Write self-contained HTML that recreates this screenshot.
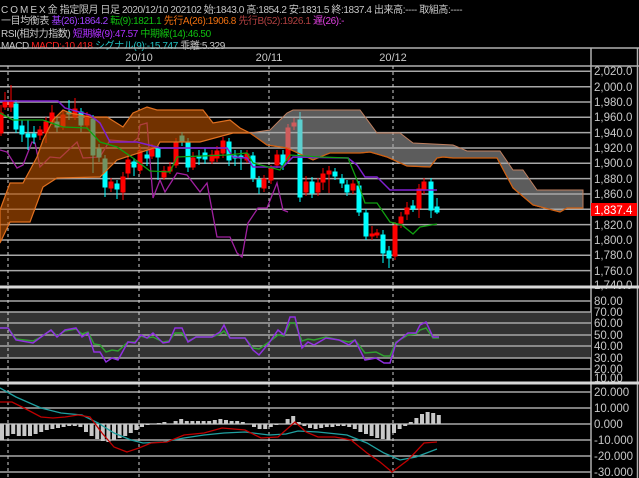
<!DOCTYPE html>
<html><head><meta charset="utf-8"><style>
html,body{margin:0;padding:0;background:#000;width:639px;height:478px;overflow:hidden}
.h{position:absolute;left:1px;font:10px "Liberation Sans","Noto Sans CJK JP",sans-serif;color:#c8c8c8;white-space:nowrap;letter-spacing:-0.4px}
</style></head><body>
<div class="h" style="top:1px"><span style="letter-spacing:2px">COMEX</span>金 指定限月 日足 2020/12/10 202102 始:1843.0 高:1854.2 安:1831.5 終:1837.4 出来高:---- 取組高:----</div>
<div class="h" style="top:12px">一目均衡表 <span style="color:#a040ff">基(26):1864.2</span> <span style="color:#10c010">転(9):1821.1</span> <span style="color:#f07010">先行A(26):1906.8</span> <span style="color:#b04040">先行B(52):1926.1</span> <span style="color:#e040e0">遅(26):-</span></div>
<div class="h" style="top:25px">RSI(相対力指数) <span style="color:#b030ff">短期線(9):47.57</span> <span style="color:#10c010">中期線(14):46.50</span></div>
<div class="h" style="top:37px">MACD <span style="color:#ff2020">MACD:-10.418</span> <span style="color:#20c0c0">シグナル(9):-15.747</span> 乖離:5.329</div>
<svg width="639" height="478" style="position:absolute;left:0;top:0" font-family="Liberation Sans,sans-serif" font-size="11">
<g fill="#c8c8c8" text-anchor="middle"><text x="139" y="61">20/10</text><text x="269" y="61">20/11</text><text x="393" y="61">20/12</text></g>
<g stroke="#b0b0b0" stroke-width="1.5"><line x1="0" y1="48" x2="639" y2="48"/><line x1="0" y1="66" x2="639" y2="66"/><line x1="591" y1="48" x2="591" y2="478"/><line x1="637.5" y1="48" x2="637.5" y2="478"/></g>
<g stroke="#a8a8a8" stroke-width="1.5">
<line x1="0" x2="591" y1="71.3" y2="71.3"/><line x1="0" x2="591" y1="86.7" y2="86.7"/><line x1="0" x2="591" y1="102" y2="102"/><line x1="0" x2="591" y1="117.3" y2="117.3"/><line x1="0" x2="591" y1="132.6" y2="132.6"/><line x1="0" x2="591" y1="148" y2="148"/><line x1="0" x2="591" y1="163.3" y2="163.3"/><line x1="0" x2="591" y1="178.6" y2="178.6"/><line x1="0" x2="591" y1="194" y2="194"/><line x1="0" x2="591" y1="209.3" y2="209.3"/><line x1="0" x2="591" y1="224.6" y2="224.6"/><line x1="0" x2="591" y1="240" y2="240"/><line x1="0" x2="591" y1="255.3" y2="255.3"/><line x1="0" x2="591" y1="270.6" y2="270.6"/>
</g>
<g fill="#c8c8c8" font-size="11.5"><text x="594" y="75">2,020.0</text><text x="594" y="91">2,000.0</text><text x="594" y="106">1,980.0</text><text x="594" y="121">1,960.0</text><text x="594" y="137">1,940.0</text><text x="594" y="152">1,920.0</text><text x="594" y="167">1,900.0</text><text x="594" y="183">1,880.0</text><text x="594" y="198">1,860.0</text><text x="594" y="244">1,800.0</text><text x="594" y="229">1,820.0</text><text x="594" y="259">1,780.0</text><text x="594" y="275">1,760.0</text><text x="594" y="289">1,740.0</text></g>
<rect x="591" y="203" width="46" height="13" fill="#ff0000"/><text x="594" y="214" fill="#fff" font-size="11.5">1,837.4</text>
<rect x="0" y="312" width="591" height="46" fill="#333"/>
<g stroke="#a8a8a8" stroke-width="1.5">
<line x1="0" x2="591" y1="301" y2="301"/><line x1="0" x2="591" y1="312" y2="312"/><line x1="0" x2="591" y1="323" y2="323"/><line x1="0" x2="591" y1="335" y2="335"/><line x1="0" x2="591" y1="346" y2="346"/><line x1="0" x2="591" y1="358" y2="358"/><line x1="0" x2="591" y1="369" y2="369"/>
<line x1="0" x2="591" y1="392" y2="392"/><line x1="0" x2="591" y1="408" y2="408"/><line x1="0" x2="591" y1="424" y2="424"/><line x1="0" x2="591" y1="440" y2="440"/><line x1="0" x2="591" y1="456" y2="456"/><line x1="0" x2="591" y1="472" y2="472"/>
</g>
<g fill="#c8c8c8" font-size="11.5"><text x="594" y="305">80.00</text><text x="594" y="316">70.00</text><text x="594" y="327">60.00</text><text x="594" y="339">50.00</text><text x="594" y="350">40.00</text><text x="594" y="362">30.00</text><text x="594" y="373">20.00</text><text x="594" y="382">10.00</text>
<text x="594" y="396">20.000</text><text x="594" y="412">10.000</text><text x="594" y="428">0.000</text><text x="594" y="444">-10.000</text><text x="594" y="460">-20.000</text><text x="594" y="476">-30.000</text></g>
<g stroke="#d0d0d0" stroke-width="1" stroke-dasharray="3,3"><line x1="8" y1="66" x2="8" y2="478"/><line x1="139" y1="66" x2="139" y2="478"/><line x1="269" y1="66" x2="269" y2="478"/><line x1="393" y1="66" x2="393" y2="478"/></g>
<polyline fill="none" stroke="#a020a0" stroke-width="1.3" points="0,150 7,152 17,168 23,165 32,142 35,143 40,167 50,157 60,158 77,142 83,158 100,157 110,140 133,142 138,138 140,125 147,123 153,198 160,180 165,192 177,173 187,175 200,192 207,183 217,237 230,237 237,253 242,257 248,223 258,208 267,208 277,183 283,210 288,212"/>
<g stroke-width="1">
<g fill="#ff0000" stroke="#ff0000">
<line x1="1" y1="105" x2="1" y2="136"/><rect x="0" y="113" width="3" height="20"/>
<line x1="5" y1="92" x2="5" y2="110"/><rect x="3" y="102" width="4" height="5"/>
<line x1="11" y1="85" x2="11" y2="112"/><rect x="9" y="102" width="4" height="5"/>
<line x1="40" y1="126" x2="40" y2="140"/><rect x="38" y="130" width="4" height="5"/>
<line x1="46" y1="117" x2="46" y2="143"/><rect x="44" y="122" width="4" height="11"/>
<line x1="52" y1="105" x2="52" y2="125"/><rect x="50" y="113" width="4" height="9"/>
<line x1="63" y1="110" x2="63" y2="130"/><rect x="61" y="115" width="4" height="12"/>
<line x1="75" y1="98" x2="75" y2="120"/><rect x="73" y="109" width="4" height="8"/>
<line x1="87" y1="112" x2="87" y2="128"/><rect x="85" y="116" width="4" height="9"/>
<line x1="111" y1="178" x2="111" y2="192"/><rect x="109" y="182" width="4" height="6"/>
<line x1="123" y1="172" x2="123" y2="200"/><rect x="121" y="177" width="4" height="15"/>
<line x1="128" y1="155" x2="128" y2="178"/><rect x="126" y="160" width="4" height="13"/>
<line x1="140" y1="146" x2="140" y2="174"/><rect x="138" y="151" width="4" height="19"/>
<line x1="152" y1="144" x2="152" y2="159"/><rect x="150" y="148" width="4" height="8"/>
<line x1="164" y1="166" x2="164" y2="180"/><rect x="162" y="171" width="4" height="6"/>
<line x1="170" y1="162" x2="170" y2="174"/><rect x="168" y="167" width="4" height="4"/>
<line x1="176" y1="138" x2="176" y2="168"/><rect x="174" y="143" width="4" height="22"/>
<line x1="193" y1="152" x2="193" y2="170"/><rect x="191" y="158" width="4" height="9"/>
<line x1="212" y1="150" x2="212" y2="164"/><rect x="210" y="155" width="4" height="6"/>
<line x1="217" y1="146" x2="217" y2="162"/><rect x="215" y="151" width="4" height="7"/>
<line x1="223" y1="137" x2="223" y2="158"/><rect x="221" y="141" width="4" height="12"/>
<line x1="247" y1="150" x2="247" y2="163"/><rect x="245" y="154" width="4" height="6"/>
<line x1="264" y1="175" x2="264" y2="192"/><rect x="262" y="179" width="4" height="9"/>
<line x1="271" y1="165" x2="271" y2="184"/><rect x="269" y="169" width="4" height="11"/>
<line x1="277" y1="150" x2="277" y2="168"/><rect x="275" y="155" width="4" height="10"/>
<line x1="288" y1="124" x2="288" y2="163"/><rect x="286" y="128" width="4" height="32"/>
<line x1="294" y1="118" x2="294" y2="130"/><rect x="292" y="123" width="4" height="3"/>
<line x1="306" y1="176" x2="306" y2="196"/><rect x="304" y="182" width="4" height="10"/>
<line x1="318" y1="178" x2="318" y2="196"/><rect x="316" y="183" width="4" height="9"/>
<line x1="323" y1="168" x2="323" y2="190"/><rect x="321" y="174" width="4" height="8"/>
<line x1="329" y1="166" x2="329" y2="193"/><rect x="327" y="171" width="4" height="3"/>
<line x1="353" y1="180" x2="353" y2="194"/><rect x="351" y="184" width="4" height="6"/>
<line x1="372" y1="226" x2="372" y2="240"/><rect x="370" y="234" width="4" height="2"/>
<line x1="377" y1="229" x2="377" y2="238"/><rect x="375" y="233" width="4" height="2"/>
<line x1="395" y1="222" x2="395" y2="260"/><rect x="393" y="226" width="4" height="30"/>
<line x1="401" y1="212" x2="401" y2="228"/><rect x="399" y="217" width="4" height="6"/>
<line x1="407" y1="202" x2="407" y2="220"/><rect x="405" y="208" width="4" height="6"/>
<line x1="419" y1="184" x2="419" y2="218"/><rect x="417" y="189" width="4" height="19"/>
<line x1="424" y1="178" x2="424" y2="194"/><rect x="422" y="182" width="4" height="8"/>
</g>
<g fill="#00ffff" stroke="#00ffff">
<line x1="16" y1="100" x2="16" y2="133"/><rect x="14" y="104" width="4" height="25"/>
<line x1="22" y1="120" x2="22" y2="142"/><rect x="20" y="126" width="4" height="8"/>
<line x1="28" y1="120" x2="28" y2="150"/><rect x="26" y="134" width="4" height="3"/>
<line x1="34" y1="126" x2="34" y2="144"/><rect x="32" y="134" width="4" height="3"/>
<line x1="57" y1="116" x2="57" y2="132"/><rect x="55" y="122" width="4" height="5"/>
<line x1="69" y1="100" x2="69" y2="120"/><rect x="67" y="112" width="4" height="2"/>
<line x1="81" y1="108" x2="81" y2="132"/><rect x="79" y="112" width="4" height="13"/>
<line x1="93" y1="115" x2="93" y2="173"/><rect x="91" y="119" width="4" height="36"/>
<line x1="99" y1="144" x2="99" y2="162"/><rect x="97" y="149" width="4" height="8"/>
<line x1="105" y1="155" x2="105" y2="197"/><rect x="103" y="159" width="4" height="28"/>
<line x1="117" y1="180" x2="117" y2="199"/><rect x="115" y="184" width="4" height="5"/>
<line x1="134" y1="158" x2="134" y2="176"/><rect x="132" y="162" width="4" height="5"/>
<line x1="147" y1="150" x2="147" y2="166"/><rect x="145" y="155" width="4" height="3"/>
<line x1="158" y1="145" x2="158" y2="180"/><rect x="156" y="149" width="4" height="8"/>
<line x1="182" y1="132" x2="182" y2="146"/><rect x="180" y="136" width="4" height="5"/>
<line x1="188" y1="138" x2="188" y2="172"/><rect x="186" y="142" width="4" height="25"/>
<line x1="199" y1="150" x2="199" y2="165"/><rect x="197" y="156" width="4" height="2"/>
<line x1="205" y1="148" x2="205" y2="164"/><rect x="203" y="153" width="4" height="6"/>
<line x1="229" y1="138" x2="229" y2="166"/><rect x="227" y="142" width="4" height="18"/>
<line x1="235" y1="150" x2="235" y2="166"/><rect x="233" y="156" width="4" height="2"/>
<line x1="241" y1="150" x2="241" y2="170"/><rect x="239" y="156" width="4" height="2"/>
<line x1="253" y1="152" x2="253" y2="182"/><rect x="251" y="156" width="4" height="22"/>
<line x1="259" y1="176" x2="259" y2="194"/><rect x="257" y="180" width="4" height="7"/>
<line x1="283" y1="150" x2="283" y2="170"/><rect x="281" y="155" width="4" height="10"/>
<line x1="300" y1="112" x2="300" y2="202"/><rect x="298" y="120" width="4" height="77"/>
<line x1="312" y1="177" x2="312" y2="198"/><rect x="310" y="182" width="4" height="11"/>
<line x1="335" y1="168" x2="335" y2="180"/><rect x="333" y="172" width="4" height="4"/>
<line x1="342" y1="174" x2="342" y2="188"/><rect x="340" y="179" width="4" height="4"/>
<line x1="347" y1="180" x2="347" y2="196"/><rect x="345" y="185" width="4" height="7"/>
<line x1="359" y1="181" x2="359" y2="216"/><rect x="357" y="186" width="4" height="26"/>
<line x1="366" y1="209" x2="366" y2="240"/><rect x="364" y="213" width="4" height="23"/>
<line x1="383" y1="230" x2="383" y2="263"/><rect x="381" y="235" width="4" height="18"/>
<line x1="389" y1="246" x2="389" y2="268"/><rect x="387" y="251" width="4" height="7"/>
<line x1="413" y1="200" x2="413" y2="212"/><rect x="411" y="206" width="4" height="3"/>
<line x1="431" y1="178" x2="431" y2="218"/><rect x="429" y="182" width="4" height="28"/>
<line x1="437" y1="198" x2="437" y2="214"/><rect x="435" y="207" width="4" height="5"/>
</g>
</g>
<polygon fill="#b85000" fill-opacity="0.62" stroke="#e07020" stroke-width="1.2" points="0,210 10,183 23,183 37,157 43,140 53,120 63,110 70,113 90,117 107,117 123,127 133,113 147,107 157,110 203,110 213,123 230,120 240,128 250,133 233,133 200,142 160,142 157,147 117,160 107,170 100,177 57,178 43,187 30,222 10,222 0,243"/>
<polygon fill="#a8a8a8" fill-opacity="0.55" stroke="#c08060" stroke-width="1" points="250,133 270,130 287,113 293,110 360,110 377,133 400,133 413,143 453,145 467,151 500,151 513,170 523,170 537,190 583,190 583,208 567,208 560,212 533,205 513,188 497,158 453,158 443,157 437,158 430,167 407,166 387,157 370,152 360,153 330,153 320,157 313,160 287,148 267,145"/>
<polyline fill="none" stroke="#d06010" stroke-width="1.2" points="250,133 267,145 287,148 313,160 320,157 330,153 360,153 370,152 387,157 407,166 430,167 437,158 443,157 453,158 497,158 513,188 533,205 560,212 567,208 583,208"/>
<polyline fill="none" stroke="#8020d0" stroke-width="1.5" points="0,101 58,101 65,108 90,115 100,123 110,142 137,142 157,147 160,148 227,148 233,157 247,158 253,167 283,167 293,157 348,158 357,165 365,177 377,177 390,190 437,190"/>
<polyline fill="none" stroke="#10a010" stroke-width="1.3" points="0,113 13,120 43,120 63,127 87,128 100,142 117,147 133,158 150,171 170,172 177,157 227,155 247,153 253,163 280,170 290,155 320,157 348,158 357,180 365,203 377,203 390,222 402,225 413,234 420,227 437,224"/>
<polyline fill="none" stroke="#30a030" stroke-width="1.5" points="0,328 8,328 16,339 33,341 41,337 51,330 57,336 65,331 76,329 82,334 88,332 94,344 100,345 106,352 112,350 118,351 128,342 135,342 141,336 147,338 153,337 163,342 169,341 175,333 182,333 188,341 196,337 212,337 220,334 224,331 230,338 245,338 253,348 259,349 269,342 278,335 284,336 290,323 295,323 302,341 308,339 314,340 326,337 339,340 349,342 355,340 365,353 376,352 384,356 390,356 396,342 408,335 416,334 420,330 426,328 433,338 439,338"/>
<polyline fill="none" stroke="#9030e0" stroke-width="1.5" points="0,328 8,328 16,340 33,343 41,337 51,330 57,337 65,330 76,328 82,337 88,333 94,352 100,352 106,362 112,358 118,360 128,342 135,343 141,335 147,338 153,333 163,343 169,342 175,328 182,328 188,342 196,337 212,337 220,332 224,325 230,338 245,338 253,350 259,355 269,343 278,330 284,335 290,317 295,317 302,348 308,342 314,345 326,338 339,340 349,345 355,340 365,360 376,358 384,363 390,363 396,343 408,333 416,333 420,325 426,322 433,337 439,337"/>
<path fill="#c8c8c8" d="M0,424h4v16h-4zM5.6,424h4v12h-4zM11.2,424h4v10h-4zM16.8,424h4v12h-4zM22.4,424h4v12h-4zM28,424h4v12h-4zM33.6,424h4v10h-4zM39.2,424h4v8h-4zM44.8,424h4v6h-4zM50.4,424h4v5h-4zM56,424h4v4h-4zM61.6,424h4v3h-4zM67.2,424h4v2h-4zM72.8,424h4v2h-4zM78.4,424h4v3h-4zM84,424h4v8h-4zM89.6,424h4v12h-4zM95.2,424h4v15h-4zM100.8,424h4v17h-4zM106.4,424h4v18h-4zM112,424h4v16h-4zM117.6,424h4v14h-4zM123.2,424h4v12h-4zM128.8,424h4v9h-4zM134.4,424h4v6h-4zM140,424h4v3h-4zM145.6,424h4v1h-4zM156.8,423h4v1h-4zM162.4,422h4v2h-4zM173.6,421h4v3h-4zM179.2,419h4v5h-4zM184.8,421h4v3h-4zM190.4,421h4v3h-4zM196,421h4v3h-4zM201.6,421h4v3h-4zM207.2,421h4v3h-4zM212.8,420h4v4h-4zM218.4,419h4v5h-4zM224,420h4v4h-4zM229.6,421h4v3h-4zM235.2,421h4v3h-4zM240.8,422h4v2h-4zM252,424h4v3h-4zM257.6,424h4v5h-4zM263.2,424h4v5h-4zM268.8,424h4v3h-4zM274.4,424h4v1h-4zM285.6,419h4v5h-4zM291.2,416h4v8h-4zM296.8,422h4v2h-4zM302.4,424h4v2h-4zM308,424h4v4h-4zM313.6,424h4v5h-4zM319.2,424h4v4h-4zM324.8,424h4v3h-4zM330.4,424h4v3h-4zM336,424h4v2h-4zM341.6,424h4v2h-4zM347.2,424h4v3h-4zM352.8,424h4v5h-4zM358.4,424h4v8h-4zM364,424h4v10h-4zM369.6,424h4v12h-4zM375.2,424h4v14h-4zM380.8,424h4v15h-4zM386.4,424h4v16h-4zM392,424h4v9h-4zM397.6,424h4v5h-4zM403.2,424h4v2h-4zM408.8,422h4v2h-4zM414.4,418h4v6h-4zM420,414h4v10h-4zM425.6,412h4v12h-4zM431.2,413h4v11h-4zM436.8,415h4v9h-4z"/>
<polyline fill="none" stroke="#20a0a0" stroke-width="1.3" points="0,388 16,397 41,408 61,413 82,415 98,423 114,433 131,440 143,443 163,442 184,438 204,435 224,433 245,432 269,435 286,434 298,431 318,432 347,435 367,443 384,453 400,460 416,457 437,449"/>
<polyline fill="none" stroke="#c00000" stroke-width="1.3" points="0,402 12,402 24,408 41,417 53,418 65,417 78,415 90,417 102,433 114,447 127,452 139,448 151,443 167,442 184,435 204,433 222,428 245,430 261,438 278,437 295,422 306,432 318,437 335,437 351,440 367,453 380,462 392,472 408,460 424,443 437,442"/>
<g stroke="#d8d8d8" stroke-width="3"><line x1="0" y1="287" x2="639" y2="287"/><line x1="0" y1="383" x2="639" y2="383"/></g>
</svg>
</body></html>
